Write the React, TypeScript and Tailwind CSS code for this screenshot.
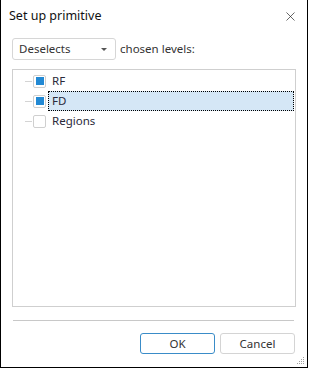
import { X } from "lucide-react";

const font = { fontFamily: '"Noto Sans", "Liberation Sans", sans-serif' };

function TreeRow({
  label,
  checked,
  selected,
}: {
  label: string;
  checked: boolean;
  selected?: boolean;
}) {
  return (
    <div className="flex items-center h-[20px]">
      <div className="w-[7px] h-px bg-[#d4d4d4] ml-[12px]" />
      <div className="ml-[1px] w-[13px] h-[13px] rounded-[2px] border border-[#cfcfcf] bg-white flex items-center justify-center">
        {checked && <div className="w-[8px] h-[8px] bg-[#2289d4]" />}
      </div>
      <div
        className={
          selected
            ? "ml-[2px] flex-1 mr-[1px] h-[20px] flex items-center pl-[3px] bg-[#d5e7f6] border border-dotted border-black"
            : "ml-[2px] flex-1 h-[20px] flex items-center pl-[4px]"
        }
      >
        <span className="text-[11.5px] text-[#2a2a3a]">{label}</span>
      </div>
    </div>
  );
}

export default function App() {
  return (
    <div className="w-[311px] h-[368px] bg-white" style={font}>
      <div className="w-[308px] h-[368px] border-l border-r border-b border-black flex flex-col">
        <div className="flex items-center justify-between h-[32px] pl-[8px] pr-[9px]">
          <span className="text-[12.5px] text-[#111]">Set up primitive</span>
          <X size={15} strokeWidth={1.1} className="text-[#222]" />
        </div>

        <div className="flex items-center mt-[6px] pl-[11px] h-[22px]">
          <div className="w-[104px] h-[22px] rounded-[3px] border border-[#d6d6d6] flex items-center justify-between pl-[6px] pr-[8px]">
            <span className="text-[11.5px] text-[#333]">Deselects</span>
            <div className="w-0 h-0 border-l-[3px] border-r-[3px] border-t-[3px] border-l-transparent border-r-transparent border-t-[#555]" />
          </div>
          <span className="ml-[4px] text-[11.5px] text-[#333]">chosen levels:</span>
        </div>

        <div className="ml-[11px] mt-[9px] w-[284px] h-[238px] border border-[#cfcfcf] pt-[1px]">
          <TreeRow label="RF" checked />
          <TreeRow label="FD" checked selected />
          <TreeRow label="Regions" checked={false} />
        </div>

        <div className="ml-[12px] mt-[13px] w-[281px] h-px bg-[#c8c8c8]" />

        <div className="flex justify-end gap-[5px] pr-[12px] mt-[12px]">
          <button className="w-[75px] h-[21px] rounded-[3px] border border-[#3a8cc8] text-[11.5px] text-[#333] bg-white">
            OK
          </button>
          <button className="w-[75px] h-[21px] rounded-[3px] border border-[#d4d4d4] text-[11.5px] text-[#333] bg-white">
            Cancel
          </button>
        </div>

        <div className="flex-1 flex items-end justify-end pr-[2px] pb-[2px]">
          <svg width="10" height="10" viewBox="0 0 10 10">
            {[
              [8, 2],
              [6, 4],
              [8, 4],
              [4, 6],
              [6, 6],
              [8, 6],
              [2, 8],
              [4, 8],
              [6, 8],
              [8, 8],
            ].map(([x, y]) => (
              <rect key={`${x}-${y}`} x={x} y={y} width="1" height="1" fill="#a0a0a0" />
            ))}
          </svg>
        </div>
      </div>
    </div>
  );
}
